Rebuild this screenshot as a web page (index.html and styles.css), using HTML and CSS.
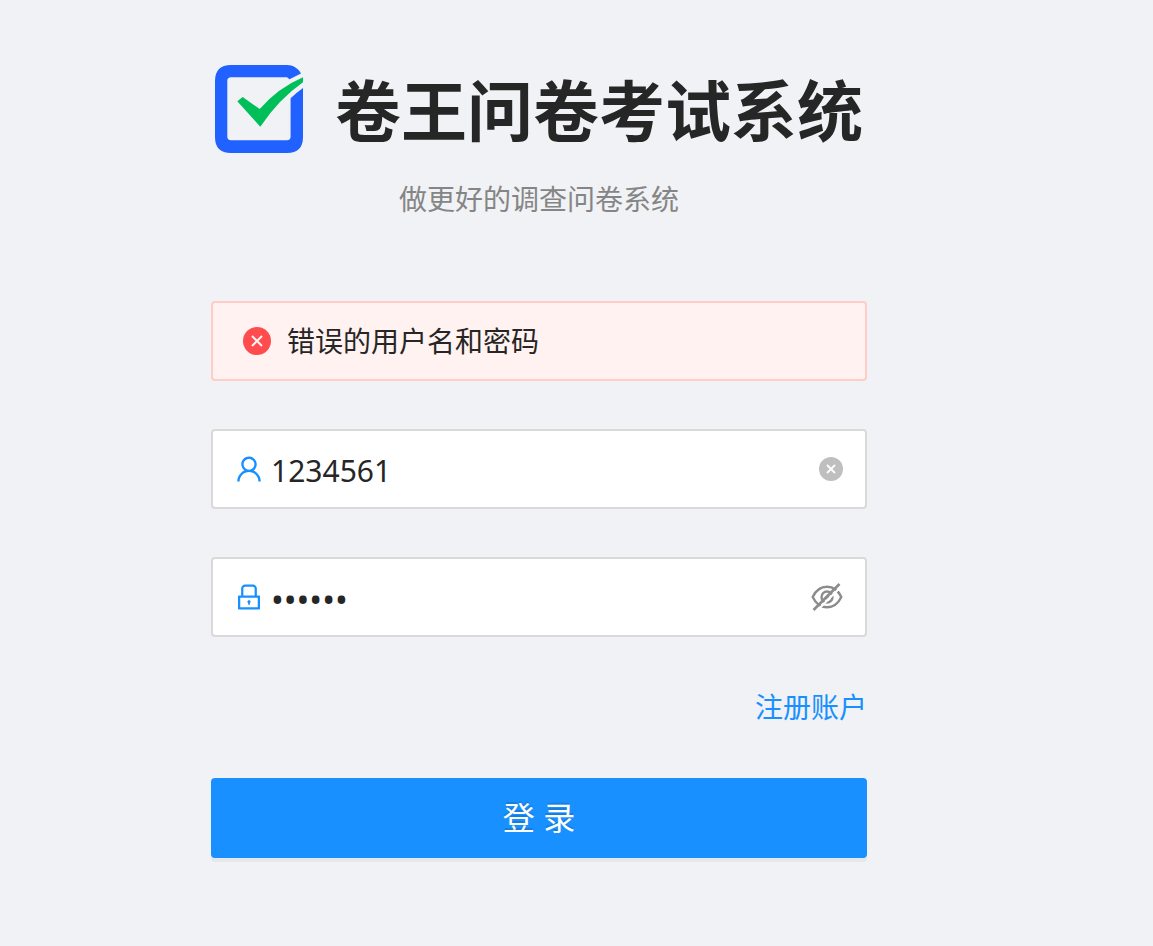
FILE: index.html
```html
<!DOCTYPE html>
<html lang="zh-CN">
<head>
<meta charset="utf-8">
<meta name="viewport" content="width=device-width, initial-scale=1">
<title>卷王问卷考试系统</title>
<link rel="stylesheet" href="styles.css">
</head>
<body>
<main class="login">
  <header class="brand">
    <svg class="brand-logo" viewBox="0 0 88 88" aria-hidden="true">
      <path fill="#2161ff" d="M16 0H72C78 0 83 3 86 8.500L74.500 14.200 72 12.300H16Q12.300 12.300 12.300 16V71.500Q12.300 75.300 16 75.300H72Q75.600 75.300 75.600 71.500V33.200Q81 28 88 23V72Q88 88 72 88H16Q0 88 0 72V16Q0 0 16 0Z"/>
      <path fill="#00bf58" d="M22.300 36.300 27.700 32 44.700 44Q63 23 88 12.300V17.300Q64 34 45.300 61.700Z"/>
    </svg>
    <h1 class="brand-title">卷王问卷考试系统</h1>
  </header>
  <p class="brand-desc">做更好的调查问卷系统</p>
  <form class="form">
    <div class="alert" role="alert">
      <svg class="alert-icon" viewBox="0 0 28 28" aria-hidden="true"><circle cx="14" cy="14" r="14" fill="#ff4d4f"/><path d="M9 9l10 10m0-10l-10 10" stroke="#fff2f0" stroke-width="2"/></svg>
      <span>错误的用户名和密码</span>
    </div>
    <div class="field">
      <svg class="field-icon" viewBox="0 0 1024 1024" aria-hidden="true"><path fill="currentColor" d="M858.5 763.6a374 374 0 00-80.6-119.5 375.63 375.63 0 00-119.5-80.6c-.4-.2-.8-.3-1.2-.5C719.5 518 760 444.7 760 362c0-137-111-248-248-248S264 225 264 362c0 82.700 40.500 156 102.800 201.100-.4.2-.8.3-1.200.5-44.800 18.900-85 46-119.500 80.600a375.630 375.630 0 00-80.600 119.500A371.700 371.700 0 00136 901.800a8 8 0 008 8.200h60c4.400 0 7.900-3.500 8-7.800 2-77.200 33-149.500 87.800-204.300 56.700-56.700 132-87.900 212.200-87.900s155.500 31.200 212.200 87.900C779 752.700 810 825 812 902.200c.1 4.400 3.600 7.800 8 7.800h60a8 8 0 008-8.200c-1-47.800-10.900-94.300-29.500-138.200zM512 534c-45.900 0-89.100-17.900-121.600-50.400S340 407.900 340 362c0-45.900 17.900-89.100 50.400-121.600S466.100 190 512 190s89.100 17.900 121.600 50.400S684 316.100 684 362c0 45.900-17.900 89.100-50.400 121.600S557.900 534 512 534z"/></svg>
      <input class="field-input" type="text" value="1234561" aria-label="用户名" autocomplete="off">
      <button class="field-action" type="button" aria-label="清除">
        <svg class="clear-icon" viewBox="0 0 24 24" aria-hidden="true"><circle cx="12" cy="12" r="12" fill="#bfbfbf"/><path d="M8 8l8 8m0-8l-8 8" stroke="#fff" stroke-width="1.800"/></svg>
      </button>
    </div>
    <div class="field">
      <svg class="field-icon" viewBox="0 0 1024 1024" aria-hidden="true"><path fill="currentColor" d="M832 464h-68V240c0-70.700-57.300-128-128-128H388c-70.700 0-128 57.300-128 128v224h-68c-17.700 0-32 14.300-32 32v384c0 17.700 14.300 32 32 32h640c17.700 0 32-14.300 32-32V496c0-17.700-14.300-32-32-32zM332 240c0-30.900 25.100-56 56-56h248c30.900 0 56 25.100 56 56v224H332V240zm460 600H232V536h560v304zM484 701v53c0 4.400 3.600 8 8 8h40c4.400 0 8-3.600 8-8v-53a48.010 48.010 0 10-56 0z"/></svg>
      <input class="field-input field-password" type="password" value="123456" aria-label="密码" autocomplete="off">
      <button class="field-action" type="button" aria-label="显示密码">
        <svg class="eye-icon" viewBox="0 0 32 32" fill="none" stroke="#8c8c8c" stroke-width="2.400" aria-hidden="true">
          <path d="M1.700 16C5 9 10 5.800 16 5.800S27 9 30.300 16C27 23 22 26.200 16 26.200S5 23 1.700 16Z"/>
          <circle cx="16" cy="16" r="5.500"/>
          <path d="M14.500 17.500l3-3" stroke-width="3"/>
          <path stroke="#fff" stroke-width="2" d="M5.200 30.500L30.500 5.200"/>
          <path stroke-width="2.600" d="M2.500 29L28.500 3"/>
        </svg>
      </button>
    </div>
    <a class="register" href="#register">注册账户</a>
    <button class="submit" type="submit">登 录</button>
  </form>
</main>
</body>
</html>
```
FILE: styles.css
```css
* {
  box-sizing: border-box;
}

body {
  margin: 0;
  padding: 65px 75px 64px 0;
  background: #f0f2f5;
  color: #262626;
  font-family: "Noto Sans", "Noto Sans CJK SC", sans-serif;
  font-size: 28px;
  line-height: 44px;
}

.login {
  max-width: 656px;
  margin: 0 auto;
}

.brand {
  display: flex;
  align-items: flex-start;
  justify-content: center;
  gap: 32px;
}

.brand-logo {
  width: 88px;
  height: 88px;
  flex: none;
}

.brand-title {
  margin: 0;
  font-family: "Noto Sans CJK SC", sans-serif;
  font-size: 66px;
  font-weight: 700;
  line-height: 84px;
}

.brand-desc {
  margin: 24px 0 80px;
  color: #858585;
  text-align: center;
}

.form {
  display: flex;
  flex-direction: column;
  gap: 48px;
}

.alert,
.field {
  display: flex;
  align-items: center;
  height: 80px;
  border: 2px solid #d9d9d9;
  border-radius: 4px;
  background: #fff;
}

.alert {
  gap: 16px;
  padding: 0 30px;
  border-color: #ffccc7;
  background: #fff2f0;
}

.alert-icon {
  width: 28px;
  height: 28px;
}

.field {
  gap: 6px;
  padding: 0 22px 0 20px;
}

.field-icon {
  flex: none;
  width: 32px;
  height: 32px;
  color: #1890ff;
}

.field-input {
  flex: 1;
  min-width: 0;
  padding: 4px 0 0;
  border: 0;
  outline: 0;
  background: transparent;
  color: inherit;
  font: inherit;
  font-size: 30px;
}

.field-password {
  font-size: 34px;
}

.field-action {
  display: flex;
  padding: 0;
  border: 0;
  background: none;
}

.clear-icon {
  width: 24px;
  height: 24px;
}

.eye-icon {
  width: 32px;
  height: 32px;
}

.register {
  align-self: flex-end;
  color: #1890ff;
  line-height: 45px;
  text-decoration: none;
}

.submit {
  height: 80px;
  border: 0;
  border-radius: 4px;
  background: #1890ff;
  box-shadow: 0 4px 0 rgba(0, 0, 0, 0.04);
  color: #fff;
  font: inherit;
  font-size: 32px;
  text-shadow: 0 -2px 0 rgba(0, 0, 0, 0.12);
}
```
